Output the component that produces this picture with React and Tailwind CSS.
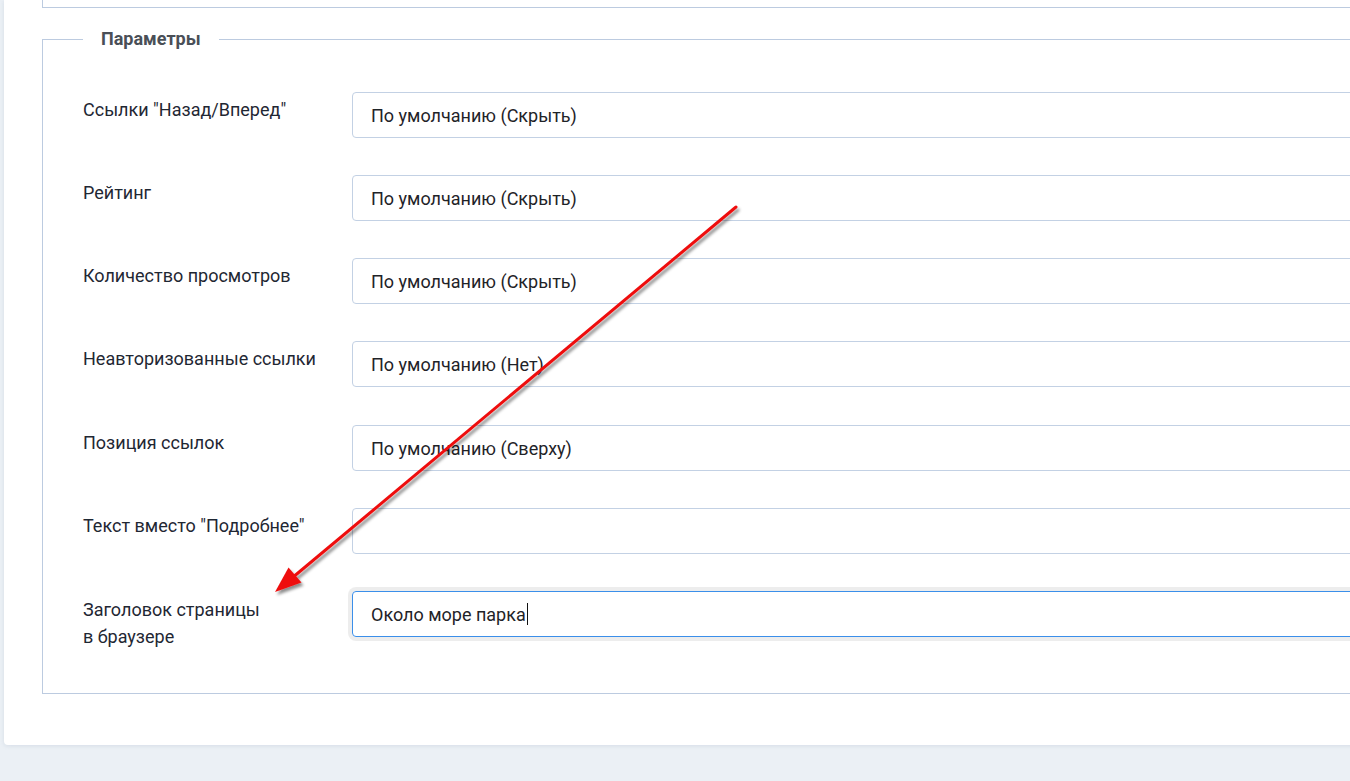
import React from "react";

const rows = [
  { label: "Ссылки \"Назад/Вперед\"", value: "По умолчанию (Скрыть)" },
  { label: "Рейтинг", value: "По умолчанию (Скрыть)" },
  { label: "Количество просмотров", value: "По умолчанию (Скрыть)" },
  { label: "Неавторизованные ссылки", value: "По умолчанию (Нет)" },
  { label: "Позиция ссылок", value: "По умолчанию (Сверху)" },
  { label: "Текст вместо \"Подробнее\"", value: "" },
];

const Arrow = () => (
  <svg
    className="absolute inset-0 pointer-events-none"
    width="1350"
    height="781"
    viewBox="0 0 1350 781"
  >
    <defs>
      <filter id="shadow" x="-10%" y="-10%" width="120%" height="120%">
        <feDropShadow dx="2" dy="3" stdDeviation="1.8" floodColor="#000" floodOpacity="0.45" />
      </filter>
    </defs>
    <g filter="url(#shadow)">
      <line x1="736" y1="207" x2="292" y2="578" stroke="#ee1111" strokeWidth="3" strokeLinecap="round" />
      <polygon points="275,592 301.5,582.5 288.5,567.5" fill="#ee1111" />
    </g>
  </svg>
);

const App = () => {
  return (
    <div
      className="relative w-[1350px] h-[781px] overflow-hidden bg-[#ebf0f5] pl-[4px]"
      style={{ fontFamily: "Roboto, 'Liberation Sans', sans-serif" }}
    >
      <div className="w-[1500px] bg-white shadow-[0_1px_4px_rgba(120,140,170,0.18)] rounded-bl-[4px] pb-[51px]">
        {/* end of the previous block */}
        <div className="ml-[38px] h-[8px] border-l border-b border-[#bccbe0]"></div>

        <fieldset className="ml-[38px] mt-[19px] border border-[#bccbe0] px-[40px] pb-[43px]">
          <legend className="px-[18px] text-[18px] font-bold leading-[24px] text-[#4a4f57]">
            Параметры
          </legend>

          <div className="flex flex-col gap-[37px] pt-[41px]">
            {rows.map((row, i) => (
              <div key={row.label} className={i === 4 ? "flex mt-[1px]" : "flex"}>
                <div className="w-[269px] pt-[4px] text-[18px] leading-[27px] text-[#1f2733]">
                  {row.label}
                </div>
                <div className="flex-1 h-[46px] flex items-center px-[18px] border border-[#c3d1e4] rounded-[4px] text-[18px] text-[#1f2328]">
                  {row.value}
                </div>
              </div>
            ))}

            <div className="flex">
              <div className="w-[269px] pt-[5px] text-[18px] leading-[27px] text-[#1f2733]">
                Заголовок страницы
                <br />
                в браузере
              </div>
              <div className="flex-1 h-[46px] flex items-center px-[18px] border border-[#3b8fea] rounded-[4px] shadow-[0_0_0_4px_rgba(0,0,0,0.07)] text-[18px] text-[#1f2328]">
                Около море парка
                <span className="inline-block w-[1px] h-[22px] bg-[#111] ml-[1px]"></span>
              </div>
            </div>
          </div>
        </fieldset>
      </div>
      <Arrow />
    </div>
  );
};

export default App;
